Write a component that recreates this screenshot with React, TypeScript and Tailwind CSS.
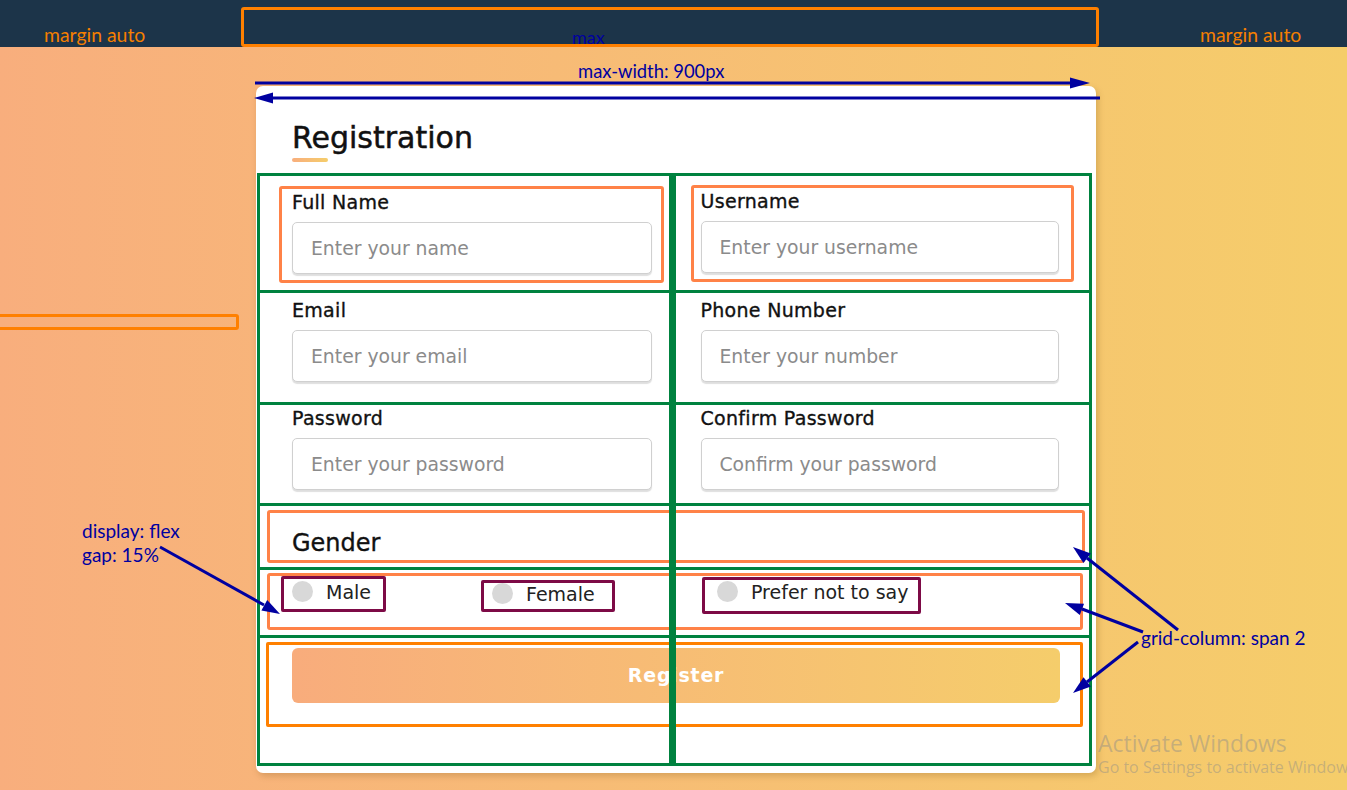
import React from "react";

const med = "[-webkit-text-stroke:0.35px_currentColor]";

function Field({
  label,
  placeholder,
  outline,
  boxCls,
  right,
}: {
  label: string;
  placeholder: string;
  outline?: boolean;
  boxCls: string;
  right?: boolean;
}) {
  return (
    <div
      className={`border-[3px] rounded-[3px] pt-[1px] pb-[6px] ${right ? "pl-[7px] pr-[12px]" : "pl-[10px] pr-[9px]"} ${
        outline ? "border-[#ff8247]" : "border-transparent"
      } ${boxCls}`}
    >
      <div className={`h-[24px] leading-[24px] text-[19px] tracking-[0.3px] text-[#111] whitespace-nowrap ${med}`}>{label}</div>
      <input
        className="mt-[8px] block w-full h-[52px] border border-[#d0d0d0] rounded-[5px] shadow-[0_2px_1px_rgba(0,0,0,0.13)] px-[18px] text-[18.8px] text-[#333] placeholder:text-[#8b8b8b] outline-none bg-white"
        placeholder={placeholder}
      />
    </div>
  );
}

function Radio({ label, cls, pad }: { label: string; cls: string; pad: string }) {
  return (
    <div className={`flex items-start border-[3px] border-[#7d0a46] rounded-[2px] ${pad} ${cls}`}>
      <span className="block w-[21px] h-[21px] rounded-full bg-[#d8d8d8] shrink-0" />
      <span className="ml-[13px] text-[19px] leading-[22px] text-[#222] whitespace-nowrap">{label}</span>
    </div>
  );
}

export default function App() {
  const blue = "#0000a0";
  return (
    <div className="relative w-full h-[790px] overflow-hidden bg-linear-to-r from-[#f8ae7d] to-[#f5cd6a] font-['DejaVu_Sans',sans-serif]">
      <div className="h-[47px] bg-[#1c3449]" />

      <div className="ml-[256px] mt-[39px] w-[840px] bg-white rounded-[7px] shadow-[2px_3px_6px_rgba(120,80,20,0.25)] pb-[7px]">
        <div className="pl-[36px] pt-[32px]">
          <div className="text-[30px] leading-[40px] text-[#111] [-webkit-text-stroke:0.5px_currentColor]">Registration</div>
          <div className="w-[36px] h-[4px] rounded-full bg-linear-to-r from-[#f8ae7d] to-[#f5cd6a]" />
        </div>

        <div className="relative mt-[11px] ml-[1px] mr-[4px] border-[3px] border-[#00823f] grid grid-cols-2">
          {/* Row 1 */}
          <div className="h-[117px] border-b-[3px] border-[#00823f] pl-[19px] pr-[11px]">
            <Field label="Full Name" placeholder="Enter your name" outline boxCls="mt-[10px]" />
          </div>
          <div className="h-[117px] border-b-[3px] border-[#00823f] pl-[16px] pr-[15px]">
            <Field label="Username" placeholder="Enter your username" outline right boxCls="mt-[9px]" />
          </div>
          {/* Row 2 */}
          <div className="h-[112px] border-b-[3px] border-[#00823f] pl-[19px] pr-[11px]">
            <Field label="Email" placeholder="Enter your email" boxCls="mt-[1px]" />
          </div>
          <div className="h-[112px] border-b-[3px] border-[#00823f] pl-[16px] pr-[15px]">
            <Field label="Phone Number" placeholder="Enter your number" right boxCls="mt-[1px]" />
          </div>
          {/* Row 3 */}
          <div className="h-[101px] border-b-[3px] border-[#00823f] pl-[19px] pr-[11px]">
            <Field label="Password" placeholder="Enter your password" boxCls="-mt-[3px]" />
          </div>
          <div className="h-[101px] border-b-[3px] border-[#00823f] pl-[16px] pr-[15px]">
            <Field label="Confirm Password" placeholder="Confirm your password" right boxCls="-mt-[3px]" />
          </div>
          {/* Gender title */}
          <div className="col-span-2 h-[64px] border-b-[3px] border-[#00823f] pl-[7px] pr-[4px] pt-[4px]">
            <div className="h-[53px] border-[3px] border-[#ff8247] rounded-[3px] pl-[22px] pt-[15px]">
              <div className={`text-[24px] leading-[30px] text-[#111] ${med}`}>Gender</div>
            </div>
          </div>
          {/* Radios */}
          <div className="col-span-2 h-[68px] border-b-[3px] border-[#00823f] pl-[7px] pr-[6px] pt-[3px]">
            <div className="h-[57px] border-[3px] border-[#ff8247] rounded-[3px] flex items-start pl-[11px]">
              <Radio label="Male" cls="w-[105px] h-[36px]" pad="pl-[8px] pt-[2px]" />
              <Radio label="Female" cls="ml-[95px] mt-[4px] w-[134px] h-[32px]" pad="pl-[8px] pt-0" />
              <Radio label="Prefer not to say" cls="ml-[87px] mt-[1px] w-[219px] h-[37px]" pad="pl-[12px] pt-[1px]" />
            </div>
          </div>
          {/* Register */}
          <div className="col-span-2 h-[125px] pl-[6px] pr-[6px] pt-[4px]">
            <div className="h-[85px] border-[3px] border-[#ff8000] rounded-[2px] pl-[23px] pt-[3px]">
              <button className="w-[768px] h-[55px] rounded-[6px] bg-linear-to-r from-[#f8ac7c] to-[#f5cd6b] text-white text-[19px] font-bold tracking-[0.75px] font-['DejaVu_Sans',sans-serif]">
                Register
              </button>
            </div>
          </div>
          {/* grid overlay middle line */}
          <div className="absolute top-0 bottom-0 left-[409px] w-[7px] bg-[#00823f] pointer-events-none" />
        </div>
      </div>

      {/* Annotations */}
      <div className="absolute left-[241px] top-[7px] w-[858px] h-[40px] border-[3px] border-[#ff8000] rounded-[3px]" />
      <div className="absolute -left-[3px] top-[314px] w-[242px] h-[16px] border-[3px] border-[#ff8000] rounded-[3px]" />

      <div className="absolute inset-0 font-['Lato',sans-serif] text-[19px] leading-[20px] pointer-events-none">
        <div className="absolute left-[44px] top-[25px] text-[#f57f00] text-[19.4px]">margin auto</div>
        <div className="absolute left-[1200px] top-[25px] text-[#f57f00] text-[19.4px]">margin auto</div>
        <div className="absolute left-[572px] top-[27px] text-[#0000a0] text-[18px]">max</div>
        <div className="absolute left-[578px] top-[61px] text-[#0000a0] text-[18.4px]">max-width: 900px</div>
        <div className="absolute left-[82px] top-[519px] text-[#0000a0]">
          <div className="leading-[24px]">display: flex</div>
          <div className="leading-[24px]">gap: 15%</div>
        </div>
        <div className="absolute left-[1141px] top-[628px] text-[#0000a0]">grid-column: span 2</div>
      </div>

      <div className="absolute left-[1098px] top-[728px] font-['Open_Sans',sans-serif] text-[#8a8a8a70] pointer-events-none whitespace-nowrap">
        <div className="text-[23px] leading-[30px]">Activate Windows</div>
        <div className="text-[16px] leading-[20px] -mt-[1px]">Go to Settings to activate Windows.</div>
      </div>

      <svg className="absolute inset-0 pointer-events-none" width="1347" height="790" viewBox="0 0 1347 790">
        <g stroke={blue} strokeWidth="3" fill="none">
          <line x1="255" y1="83" x2="1072" y2="83" />
          <line x1="1100" y1="98" x2="272" y2="98" />
          <line x1="160" y1="547" x2="264" y2="605" />
          <line x1="1178" y1="630" x2="1087" y2="558" />
          <line x1="1143" y1="632" x2="1082" y2="609" />
          <line x1="1138" y1="642" x2="1087" y2="682" />
        </g>
        <g fill={blue}>
          <polygon points="1090,83 1070,77.5 1070,88.5" />
          <polygon points="254,98 273,92.5 273,103.5" />
          <polygon points="280,614 261.4,610.4 267.2,600" />
          <polygon points="1073,547 1090.8,553.5 1083.4,562.9" />
          <polygon points="1065,603 1084,603.7 1079.8,614.9" />
          <polygon points="1073,693 1090.9,686.6 1083.5,677.2" />
        </g>
      </svg>
    </div>
  );
}
